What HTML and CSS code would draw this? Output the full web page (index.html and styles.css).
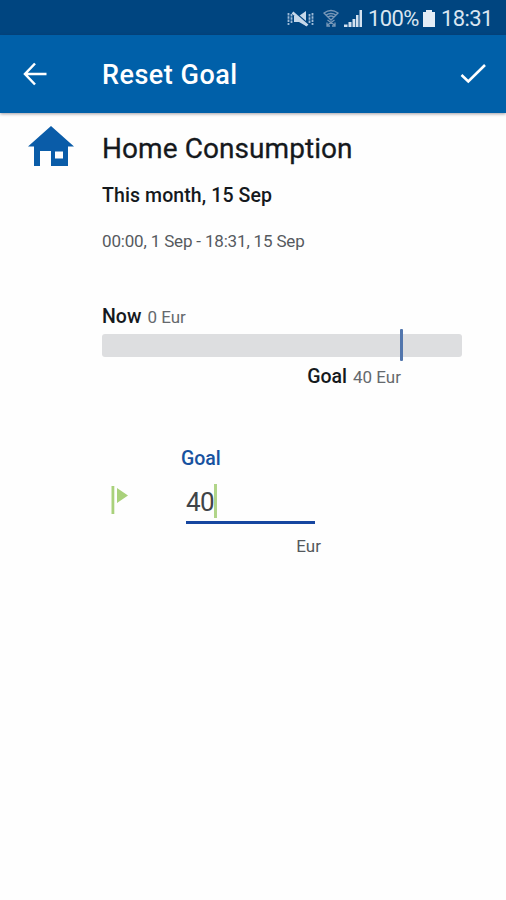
FILE: index.html
```html
<!DOCTYPE html>
<html lang="en">
<head>
<meta charset="utf-8">
<title>Reset Goal</title>
<link rel="stylesheet" href="styles.css">
</head>
<body>
<div class="status">
  <svg class="mute" width="27" height="20" viewBox="0 0 27 20"><path d="M7 7h5l7-5v15l-7-4H7z" fill="#c6d8ea"/><path d="M6 2l15 13" stroke="#004580" stroke-width="2"/><path d="M5.500 3.500l15 13" stroke="#c6d8ea" stroke-width="2.600"/><path d="M1.500 4v12M4.500 5v10M22.500 5v10M25.500 4v12" stroke="#9dbad7" stroke-width="1.800" stroke-dasharray="2.400 .9"/></svg>
  <svg class="wifi" width="16" height="20" viewBox="0 0 16 20" fill="none" stroke="#7898b8" stroke-width="1.300"><path d="M1 4q7-5 14 0L8 11zM3 6q5-3 10 0M5 8q3-2 6 0M4.500 11l7 5M11.500 11l-7 5M4 13.500V17h3M12 13.500V17H9"/></svg>
  <svg class="signal" width="19" height="18" viewBox="0 0 19 18" fill="#d4e2f0"><path d="M0 15.500h3.500V18H0zM4.500 13H7.500v5h-3zM8.500 10h2.800v8H8.500zM12 6h2.500v12H12zM15.500 1H18v17h-2.500z"/></svg>
  <span class="percent">100%</span>
  <svg class="battery" width="14" height="18" viewBox="0 0 14 18"><path d="M4 1h6v2h3v15H1V3h3z" fill="#e4edf6"/></svg>
  <span class="clock">18:31</span>
</div>
<header class="bar">
  <svg class="back" width="24" height="24" viewBox="0 0 24 24" fill="none" stroke="#fff" stroke-width="2.500"><path d="M12 1.500L2 12l10 10.500M2 12h21.500"/></svg>
  <h1>Reset Goal</h1>
  <svg class="check" width="26" height="20" viewBox="0 0 26 20" fill="none" stroke="#fff" stroke-width="2.600"><path d="M1.500 11l6.800 6.500L25 1"/></svg>
</header>
<main>
  <section class="summary">
    <svg class="home" width="46" height="40" viewBox="0 0 46 40" fill="#0a5ca8" fill-rule="evenodd"><path d="M23 0L46 20.500H40V40H23V25H12V40H6V20.500H0zM27 25.500v7h8v-7z"/></svg>
    <div>
      <h2>Home Consumption</h2>
      <p class="period">This month, 15 Sep</p>
      <p class="range">00:00, 1 Sep - 18:31, 15 Sep</p>
    </div>
  </section>
  <section class="progress">
    <p class="now"><b>Now</b><span>0 Eur</span></p>
    <div class="track"><i class="marker"></i></div>
    <p class="target"><b>Goal</b><span>40 Eur</span></p>
  </section>
  <section class="entry">
    <svg class="flag" width="18" height="30" viewBox="0 0 18 30" fill="#a9d17b"><path d="M.5 1h2.800v28H.5zM6 3l11 7.500L6 18z"/></svg>
    <div class="field">
      <label>Goal</label>
      <div class="input"><span>40</span><i class="caret"></i></div>
      <p class="unit">Eur</p>
    </div>
  </section>
</main>
</body>
</html>
```
FILE: styles.css
```css
* { box-sizing: border-box; }
body { margin: 0; height: 900px; background: #fefefe; font-family: Roboto, sans-serif; color: #15191d; overflow: hidden; }
h1, h2, p { margin: 0; white-space: nowrap; }
svg { display: block; flex: none; }
.status { height: 35px; background: #004580; display: flex; align-items: flex-start; padding: 9px 0 0 287px; color: #d9e5f1; }
.status span { font-size: 22px; line-height: 20px; white-space: nowrap; }
.wifi { margin-left: 9px; }
.signal { margin-left: 5px; }
.percent { margin-left: 5px; width: 53px; letter-spacing: -0.6px; }
.battery { margin-left: 1px; }
.clock { margin-left: 5px; letter-spacing: -0.6px; }
.bar { height: 78px; background: #0060a9; display: flex; align-items: center; padding: 0 20px 0 23px; box-shadow: 0 1px 3px rgba(50,35,50,.45); position: relative; }
h1 { margin-left: 55px; flex: 1; font-size: 27px; line-height: 32px; font-weight: 500; color: #fff; padding-top: 1px; letter-spacing: .5px; }
main { padding: 13px 0 0 28px; }
.summary { display: flex; gap: 28px; }
h2 { font-size: 28px; line-height: 34px; font-weight: 400; margin-top: 6px; letter-spacing: .07px; -webkit-text-stroke: .3px; }
.period { font-size: 19.5px; line-height: 24px; font-weight: 500; margin-top: 18px; letter-spacing: .1px; }
.range { font-size: 17px; line-height: 22px; color: #565a5e; margin-top: 22px; letter-spacing: -.17px; }
.progress { margin: 53px 0 0 74px; width: 360px; }
.progress p { line-height: 24px; font-size: 19.5px; }
.progress b { font-weight: 500; }
.progress span { font-size: 17px; color: #65696d; margin-left: 6px; }
.track { height: 23px; margin-top: 5px; border-radius: 3px; background: #dddee0; position: relative; }
.marker { position: absolute; left: 298px; top: -5px; width: 3px; height: 32px; background: #5276ad; border-radius: 1px; }
.target { width: 299px; text-align: right; margin-top: 8px; }
.entry { display: flex; margin: 57px 0 0 83px; }
.flag { margin-top: 39px; }
.field { margin-left: 52px; }
label { display: block; font-size: 19.5px; line-height: 24px; font-weight: 500; color: #1752a0; padding-top: 1px; }
.input { margin: 12px 0 0 5px; width: 129px; height: 41px; border-bottom: 3px solid #1646a0; display: flex; align-items: flex-start; color: #404448; font-size: 26px; line-height: 39px; }
.input span { letter-spacing: -.5px; }
.caret { width: 3px; height: 34px; background: #b1d589; margin-top: 1px; }
.unit { font-size: 17px; line-height: 20px; color: #54585c; width: 140px; text-align: right; margin-top: 12px; }
```
